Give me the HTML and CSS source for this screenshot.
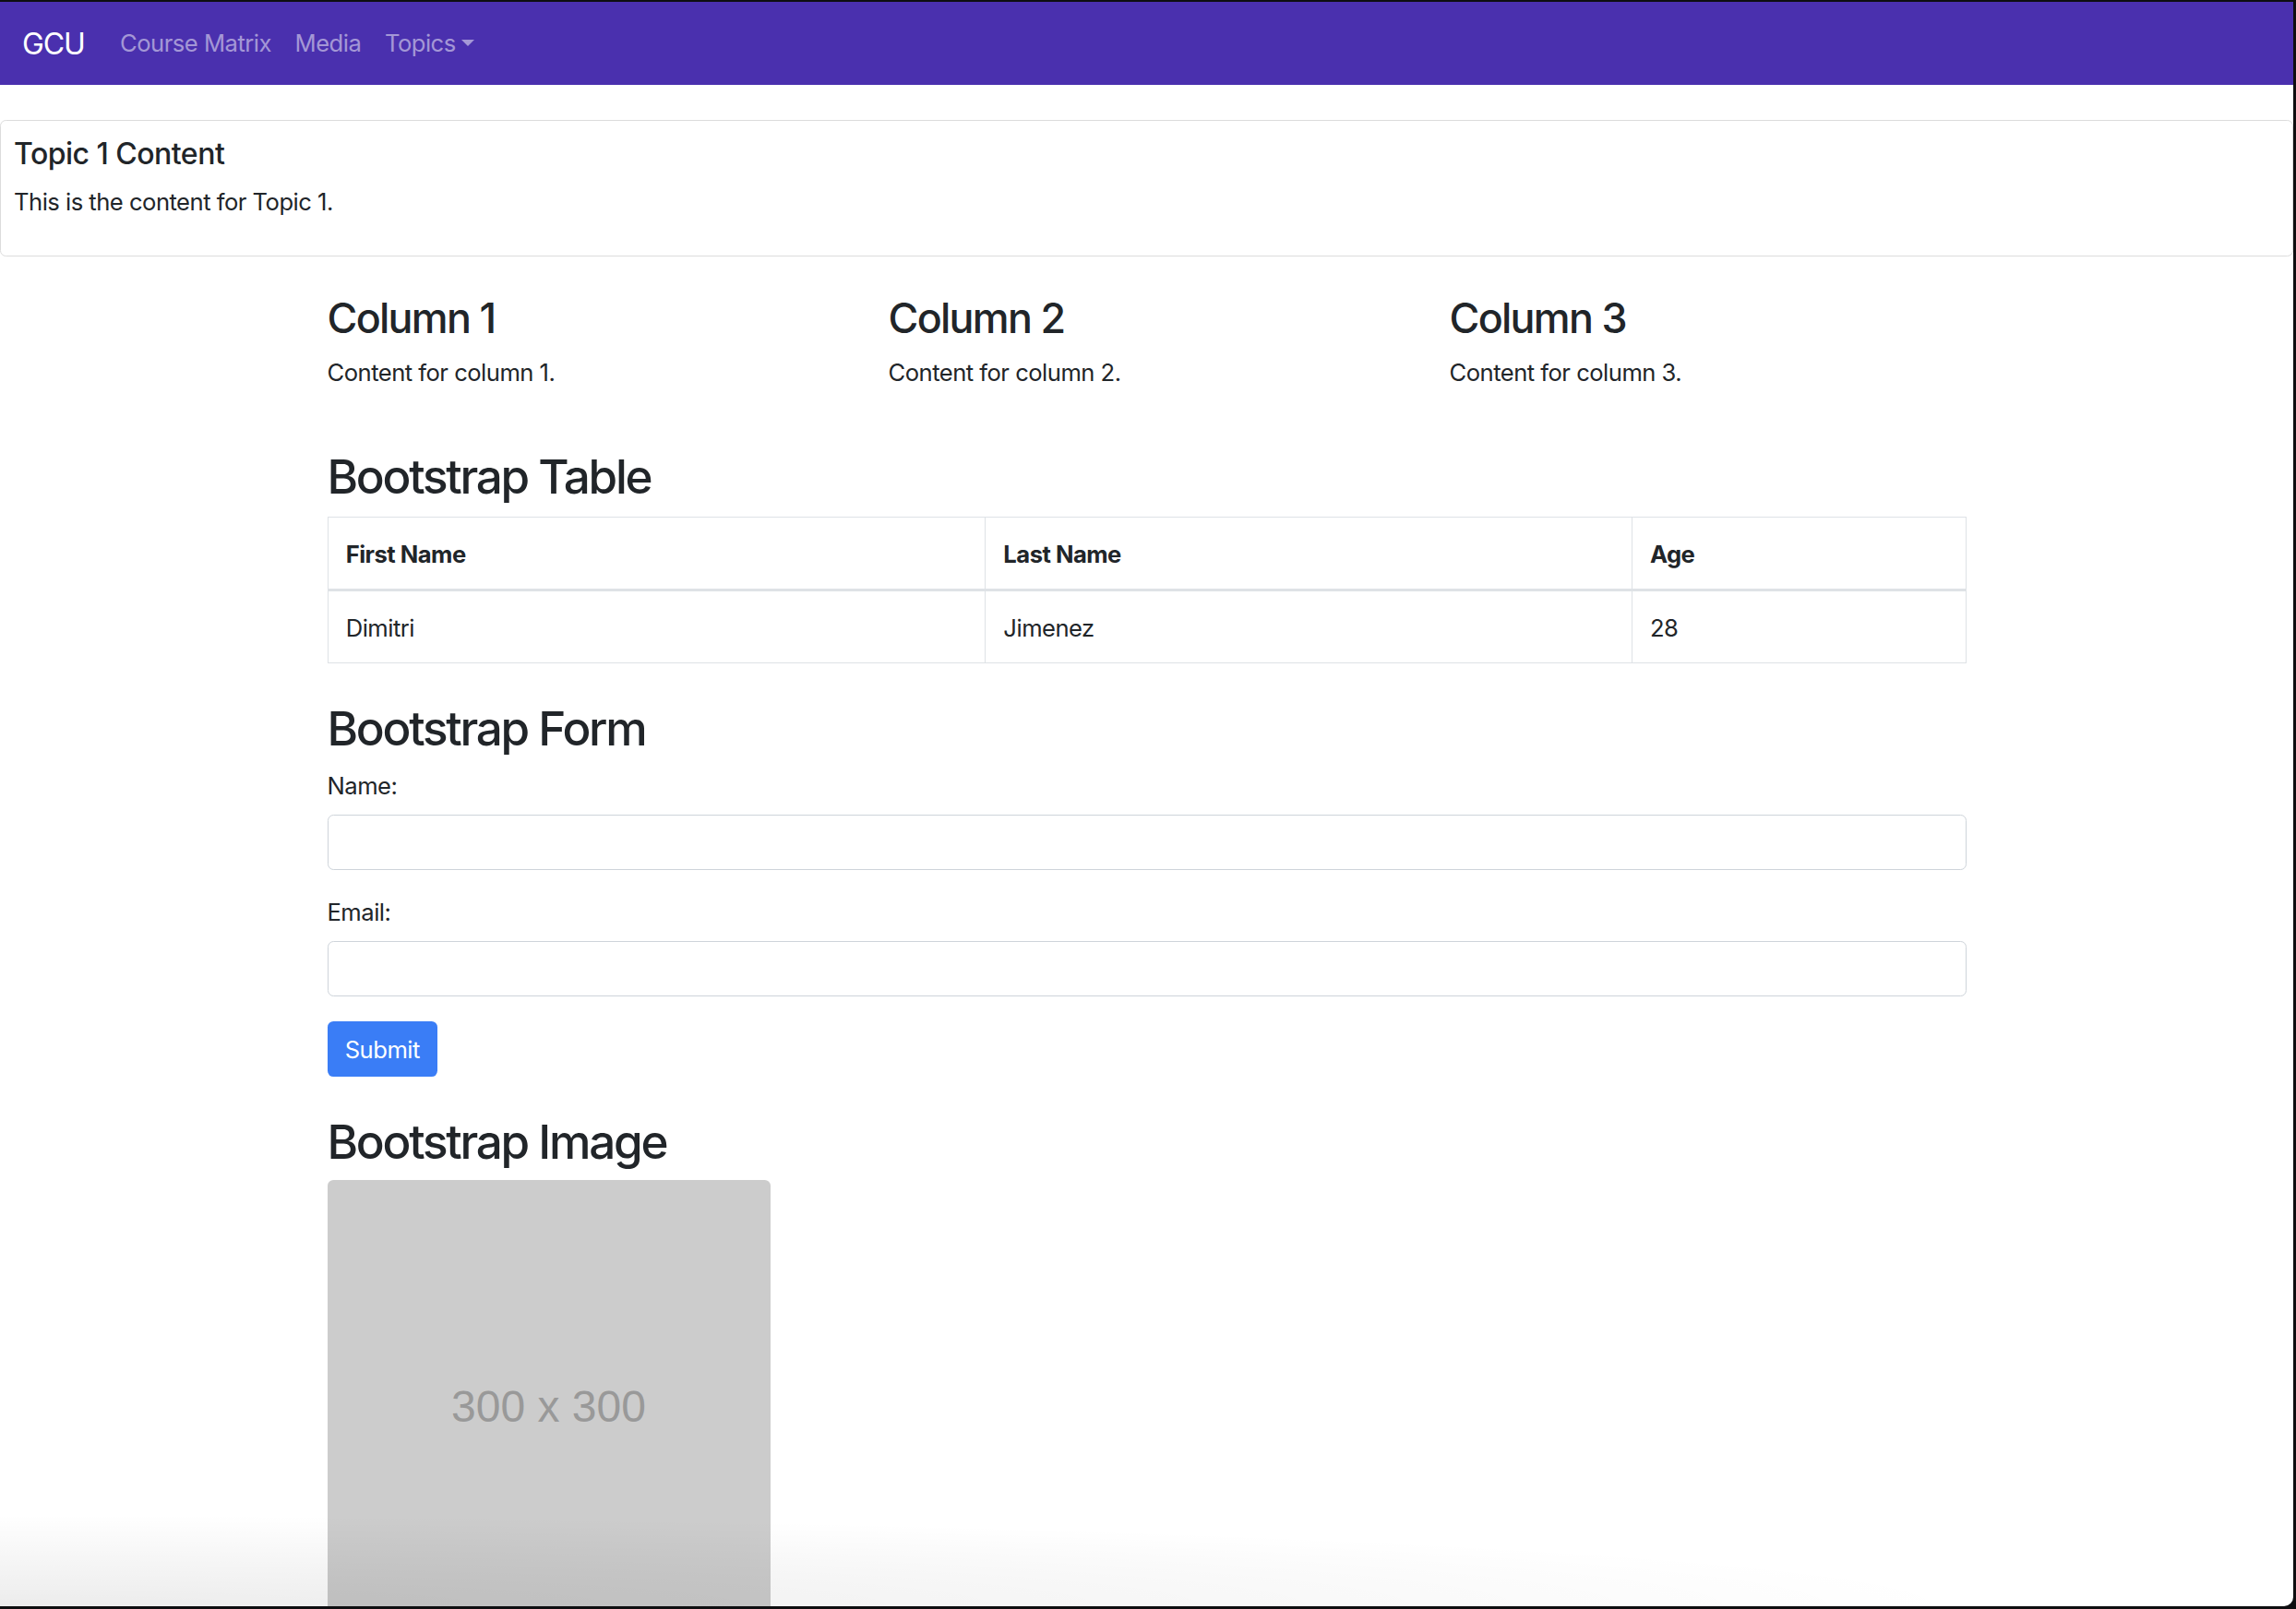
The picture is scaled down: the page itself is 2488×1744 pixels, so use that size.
FILE: index.html
```html
<!DOCTYPE html>
<html lang="en">
<head>
<meta charset="utf-8">
<title>GCU</title>
<link rel="stylesheet" href="styles.css">
</head>
<body>
<div class="window">
  <nav class="navbar">
    <a class="brand" href="#">GCU</a>
    <ul class="nav">
      <li><a class="nav-link" href="#">Course Matrix</a></li>
      <li><a class="nav-link" href="#">Media</a></li>
      <li><a class="nav-link dropdown-toggle" href="#">Topics<span class="caret"></span></a></li>
    </ul>
  </nav>

  <div class="topic-card">
    <h5 class="topic-title">Topic 1 Content</h5>
    <p class="text">This is the content for Topic 1.</p>
  </div>

  <main class="container">
    <div class="row">
      <div class="col">
        <h3 class="col-title">Column 1</h3>
        <p class="text">Content for column 1.</p>
      </div>
      <div class="col">
        <h3 class="col-title">Column 2</h3>
        <p class="text">Content for column 2.</p>
      </div>
      <div class="col">
        <h3 class="col-title">Column 3</h3>
        <p class="text">Content for column 3.</p>
      </div>
    </div>

    <h2 class="section-title first">Bootstrap Table</h2>
    <table class="table">
      <colgroup>
        <col class="c1"><col class="c2"><col class="c3">
      </colgroup>
      <thead>
        <tr><th>First Name</th><th>Last Name</th><th>Age</th></tr>
      </thead>
      <tbody>
        <tr><td>Dimitri</td><td>Jimenez</td><td>28</td></tr>
      </tbody>
    </table>

    <h2 class="section-title form-title">Bootstrap Form</h2>
    <form class="form">
      <div class="form-group">
        <label class="label" for="name">Name:</label>
        <input class="input" type="text" id="name">
      </div>
      <div class="form-group">
        <label class="label" for="email">Email:</label>
        <input class="input" type="email" id="email">
      </div>
      <button class="btn" type="button">Submit</button>
    </form>

    <h2 class="section-title image-title">Bootstrap Image</h2>
    <div class="placeholder"><span class="ph-text">300 x 300</span></div>
  </main>

  <div class="bottom-shade"></div>
</div>
</body>
</html>
```

FILE: styles.css
```css
* { box-sizing: border-box; }

html, body {
  margin: 0;
  padding: 0;
  background: #0e0e10;
  height: 100%;
  overflow: hidden;
}

body {
  font-family: Inter, "Liberation Sans", sans-serif;
  color: #212529;
  font-size: 25.6px;
  line-height: 1.5;
  letter-spacing: -0.02em;
}

.window {
  position: relative;
  width: 2485px;
  height: 1739px;
  margin-top: 2px;
  background: #fff;
  overflow: hidden;
  border-bottom-right-radius: 10px;
}

/* Navbar */
.navbar {
  display: flex;
  align-items: center;
  height: 90px;
  padding: 1px 25.6px 0 24px;
  background: #4a30ae;
}

.brand {
  color: #fff;
  text-decoration: none;
  font-size: 32px;
  line-height: 48px;
  margin-right: 25.6px;
  letter-spacing: -0.035em;
}

.nav {
  display: flex;
  list-style: none;
  margin: 0;
  padding: 0;
}

.nav-link {
  display: block;
  padding: 12.8px;
  color: rgba(255, 255, 255, 0.5);
  text-decoration: none;
  line-height: 38.4px;
}

.caret {
  display: inline-block;
  margin-left: 6.5px;
  vertical-align: 6.5px;
  border-top: 7.7px solid rgba(255, 255, 255, 0.5);
  border-left: 7.7px solid transparent;
  border-right: 7.7px solid transparent;
}

/* Topic card */
.topic-card {
  margin-top: 38.4px;
  border: 1px solid #dcdcdc;
  border-radius: 6.4px;
  padding: 17px 16px 13px 14px;
}

.topic-title {
  margin: 0 0 12.8px;
  font-size: 32px;
  font-weight: 500;
  line-height: 1.2;
}

.text {
  margin: 0 0 25.6px;
  line-height: 38.4px;
}

/* Container */
.container {
  width: 1824px;
  margin: 0 auto;
  padding: 0 24px;
}

.row {
  display: grid;
  grid-template-columns: repeat(3, 1fr);
  margin: 41.4px -24px 0;
}

.col {
  padding: 0 24px;
}

.col-title {
  margin: 0 0 11.8px;
  font-size: 44.8px;
  font-weight: 500;
  line-height: 1.2;
  letter-spacing: -0.038em;
}

.section-title {
  margin: 42px 0 12.8px;
  font-size: 51.2px;
  font-weight: 500;
  line-height: 1.2;
  letter-spacing: -0.044em;
}

.section-title.first {
  margin-top: 37.4px;
}

.section-title.form-title {
  margin-top: 40.5px;
}

.section-title.image-title {
  margin-top: 39.5px;
  margin-bottom: 11px;
}

/* Table */
.table {
  width: 100%;
  border-collapse: collapse;
  border: 1px solid #dee2e6;
}

.c1 { width: 40.15%; }
.c2 { width: 39.47%; }
.c3 { width: 20.38%; }

.table th,
.table td {
  padding: 21px 19.2px 17.4px;
  line-height: 38.4px;
  text-align: left;
  border: 1px solid #dee2e6;
  vertical-align: top;
}

.table th {
  font-weight: 700;
  border-bottom: 3px solid #dee2e6;
}

/* Form */
.form {
  display: flex;
  flex-direction: column;
  align-items: flex-start;
}

.form-group {
  width: 100%;
  margin-bottom: 27.5px;
}

.label {
  display: block;
  line-height: 38.4px;
  margin-bottom: 11px;
}

.input {
  display: block;
  width: 100%;
  height: 60px;
  border: 1px solid #ced4da;
  border-radius: 6.4px;
  background: #fff;
  font: inherit;
}

.btn {
  height: 60px;
  padding: 1px 19.2px 0;
  border: 0;
  border-radius: 6.4px;
  background: #3a7df6;
  color: #fff;
  font: inherit;
  letter-spacing: -0.02em;
  line-height: 38.4px;
}

/* Placeholder image */
.placeholder {
  display: flex;
  align-items: center;
  justify-content: center;
  width: 480px;
  height: 480px;
  background: #cccccc;
  border-radius: 6.4px;
}

.ph-text {
  padding-top: 12px;
  font-family: "Liberation Sans", Arial, sans-serif;
  font-size: 48px;
  letter-spacing: 0;
  color: #999999;
}

/* bottom fade of the screen */
.bottom-shade {
  position: absolute;
  left: 0;
  bottom: 0;
  width: 2200px;
  height: 100px;
  pointer-events: none;
  background: radial-gradient(ellipse 2150px 100px at 0 100%, rgba(0, 0, 0, 0.075), rgba(0, 0, 0, 0) 100%);
}
```
